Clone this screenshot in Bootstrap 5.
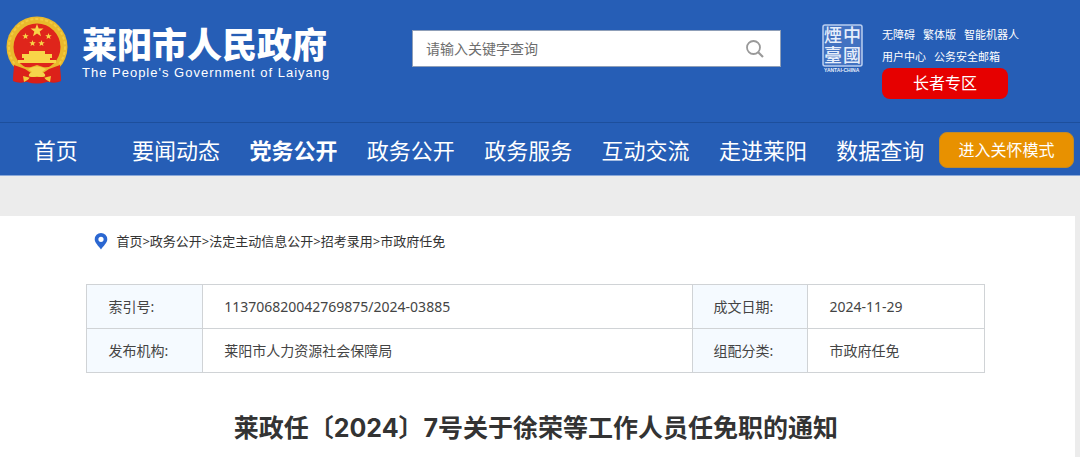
<!DOCTYPE html>
<html lang="zh-CN">
<head>
<meta charset="utf-8">
<meta name="viewport" content="width=device-width, initial-scale=1">
<title>莱阳市人民政府</title>
<link rel="stylesheet" href="https://cdn.jsdelivr.net/npm/bootstrap@5.3.0/dist/css/bootstrap.min.css">
<style>
body{font-family:"Noto Sans","Noto Sans CJK SC",sans-serif;font-size:14px;color:#444;background:#ececec}
a{color:inherit;text-decoration:none}
.site-head{background:#265eb6;color:#fff}
.head-grid{display:grid;grid-template-columns:412fr 410fr 258fr;height:122px}
.emblem{width:62px;height:68px}
.brand{padding:16px 0 0 6px;gap:14px}
.brand-text{padding-top:5px}
.site-name{font-family:"Noto Sans CJK SC",sans-serif;font-size:35px;line-height:44px;font-weight:900}
.site-en{font-family:"Liberation Sans",sans-serif;font-size:13px;line-height:16px;letter-spacing:1px}
.search-form{padding-top:30px}
.search{width:90%;height:37px;background:#fff;border:1px solid #8f9fb8}
.search .form-control{font-size:14px;color:#555;padding:0 13px}
.search .form-control::placeholder{color:#6d6d6d;opacity:1}
.seal{width:42px;height:50px;overflow:visible}
.tools{gap:18px}
.quick{font-size:11px;line-height:22px}
.elder{display:block;width:126px;height:31px;line-height:31px;border-radius:8px;background:#e60000;font-size:16px}
.main-nav{height:54px;border-top:1px solid #1d4f9c;border-bottom:1px solid #8aa8d8;font-size:22px;line-height:52px;padding:2px 6px 0 0}
.main-nav li{flex:118 1 0}
.main-nav li:first-child{flex-grow:112;padding-right:6px}
.care{width:135px;height:36px;border:1px solid #c08a28;border-radius:8px;background:#e89100;color:#fff;font-size:16px;line-height:34px;padding:0}
.sheet{background:#fff;margin:40px 5px 0 0;padding:14px 8.3% 12px 8%}
.crumbs{font-size:13px;line-height:22px;color:#333}
.info{margin-top:32px;table-layout:fixed;border-color:#d0d3d6}
.info th,.info td{height:44px;padding:0 21px;font-weight:400;vertical-align:middle;color:#444;border:1px solid #d0d3d6}
.info th{background:#f5faff}
.doc-title{font-family:Inter,"Noto Sans CJK SC",sans-serif;font-size:25px;line-height:36px;font-weight:700;color:#333;margin:37px 0 0}
</style>
</head>
<body>
<header class="site-head">
  <div class="head-grid">
    <a href="#" class="brand d-flex text-nowrap">
      <svg class="emblem flex-shrink-0" viewBox="0 0 62 68" aria-hidden="true">
        <path d="M9 44L7 65q6 3 12 1l12-1 12 1q6 2 12-1l-2-21z" fill="#d81e18"/>
        <circle cx="31" cy="31" r="30.500" fill="#e9b92c"/>
        <circle cx="31" cy="31" r="28" fill="none" stroke="#f2cb40" stroke-width="2" stroke-dasharray="3 2"/>
        <circle cx="31" cy="31" r="23.500" fill="#df251b"/>
        <g fill="#f8d548">
          <path id="star" d="M31 8l1.700 4.500 4.800.1-3.800 3 1.300 4.600-4-2.700-4 2.700 1.300-4.600-3.800-3 4.800-.1z"/>
          <use href="#star" transform="translate(4 13) scale(.5)"/>
          <use href="#star" transform="translate(27 13) scale(.5)"/>
          <use href="#star" transform="translate(11 20) scale(.5)"/>
          <use href="#star" transform="translate(20 20) scale(.5)"/>
          <path d="M23 35h16v3h7v4h-2v2h6v3H12v-3h6v-2h-2v-4h7z"/>
        </g>
        <path d="M9 48q9 4 16 3l6-2 6 2q7 1 16-3l-3 7q-6 3-12 1l-7-2-7 2q-6 2-12-1z" fill="#e9b92c"/>
        <path d="M8 49l11 4 6 4-6 9-12-1zM54 49l-11 4-6 4 6 9 12-1z" fill="#dc211a"/>
        <path d="M17 60l8 2-7 4zM45 60l-8 2 7 4z" fill="#f3cc3b"/>
        <path d="M22 53q9-5 18 0l-4 3q4 2 3 4-4 2-8 0-4 2-8 0-1-2 3-4z" fill="#f5d44b"/>
        <path d="M24 61h14l3 5q-10 3-20 0z" fill="#d81e18"/>
      </svg>
      <span class="brand-text">
        <span class="site-name d-block">莱阳市人民政府</span>
        <span class="site-en d-block">The People's Government of Laiyang</span>
      </span>
    </a>
    <form class="search-form" role="search">
      <div class="search d-flex align-items-center">
        <input class="form-control border-0 bg-transparent h-100" type="text" placeholder="请输入关键字查询" aria-label="请输入关键字查询">
        <button type="button" class="btn p-0 border-0 me-3 lh-1 flex-shrink-0" aria-label="搜索">
          <svg width="18" height="18" viewBox="0 0 18 18" fill="none" stroke="#999" stroke-width="1.800"><circle cx="7.500" cy="7.500" r="6.500"/><path d="M12 12l5 5" stroke-width="2.200"/></svg>
        </button>
      </div>
    </form>
    <div class="tools d-flex pt-4 text-nowrap">
      <svg class="seal flex-shrink-0" viewBox="0 0 42 50" fill="#e6eefb" font-family="Noto Sans CJK TC, sans-serif" role="img" aria-label="煙臺中國">
        <rect x="1" y="1" width="39" height="41" rx="2" fill="#4272c1" stroke="#b9cef0" stroke-width="1.500"/>
        <text x="2" y="18" font-size="18" font-weight="500">煙</text><text x="21" y="18" font-size="18" font-weight="500">中</text>
        <text x="2" y="38" font-size="18" font-weight="500">臺</text><text x="21" y="38" font-size="18" font-weight="500">國</text>
        <text x="2" y="48" font-size="5" font-weight="700" font-family="Liberation Sans">YANTAI-CHINA</text>
      </svg>
      <div class="quick">
        <div class="d-flex gap-2"><a href="#">无障碍</a><a href="#">繁体版</a><a href="#">智能机器人</a></div>
        <div class="d-flex gap-2"><a href="#">用户中心</a><a href="#">公务安全邮箱</a></div>
        <a href="#" class="elder text-center">长者专区</a>
      </div>
    </div>
  </div>
  <nav class="main-nav d-flex align-items-center text-nowrap">
    <ul class="list-unstyled d-flex flex-fill text-center mb-0">
      <li><a href="#">首页</a></li><li><a href="#">要闻动态</a></li><li><a href="#" class="fw-bold">党务公开</a></li><li><a href="#">政务公开</a></li><li><a href="#">政务服务</a></li><li><a href="#">互动交流</a></li><li><a href="#">走进莱阳</a></li><li><a href="#">数据查询</a></li>
    </ul>
    <button type="button" class="care btn flex-shrink-0">进入关怀模式</button>
  </nav>
</header>
<main class="sheet">
  <nav class="crumbs d-flex align-items-center ps-2" aria-label="当前位置">
    <svg class="me-2" width="14" height="18" viewBox="0 0 14 18" aria-hidden="true"><path fill="#2b67d1" fill-rule="evenodd" d="M7 1a6.300 6.300 0 0 1 6.300 6.300C13.300 11 9 14.500 7 17.500 5 14.500.7 11 .7 7.300A6.300 6.300 0 0 1 7 1zm0 3.700a2.600 2.600 0 1 0 0 5.200 2.600 2.600 0 0 0 0-5.200z"/></svg>
    <span><a href="#">首页</a>&gt;<a href="#">政务公开</a>&gt;<a href="#">法定主动信息公开</a>&gt;<a href="#">招考录用</a>&gt;<a href="#">市政府任免</a></span>
  </nav>
  <table class="info table mb-0">
    <colgroup><col style="width:12.9%"><col style="width:54.5%"><col style="width:12.9%"><col></colgroup>
    <tbody>
    <tr><th scope="row">索引号:</th><td>113706820042769875/2024-03885</td><th scope="row">成文日期:</th><td>2024-11-29</td></tr>
    <tr><th scope="row">发布机构:</th><td>莱阳市人力资源社会保障局</td><th scope="row">组配分类:</th><td>市政府任免</td></tr>
    </tbody>
  </table>
  <h1 class="doc-title text-center">莱政任〔2024〕7号关于徐荣等工作人员任免职的通知</h1>
</main>
<script src="https://cdn.jsdelivr.net/npm/bootstrap@5.3.0/dist/js/bootstrap.bundle.min.js"></script>
</body>
</html>
